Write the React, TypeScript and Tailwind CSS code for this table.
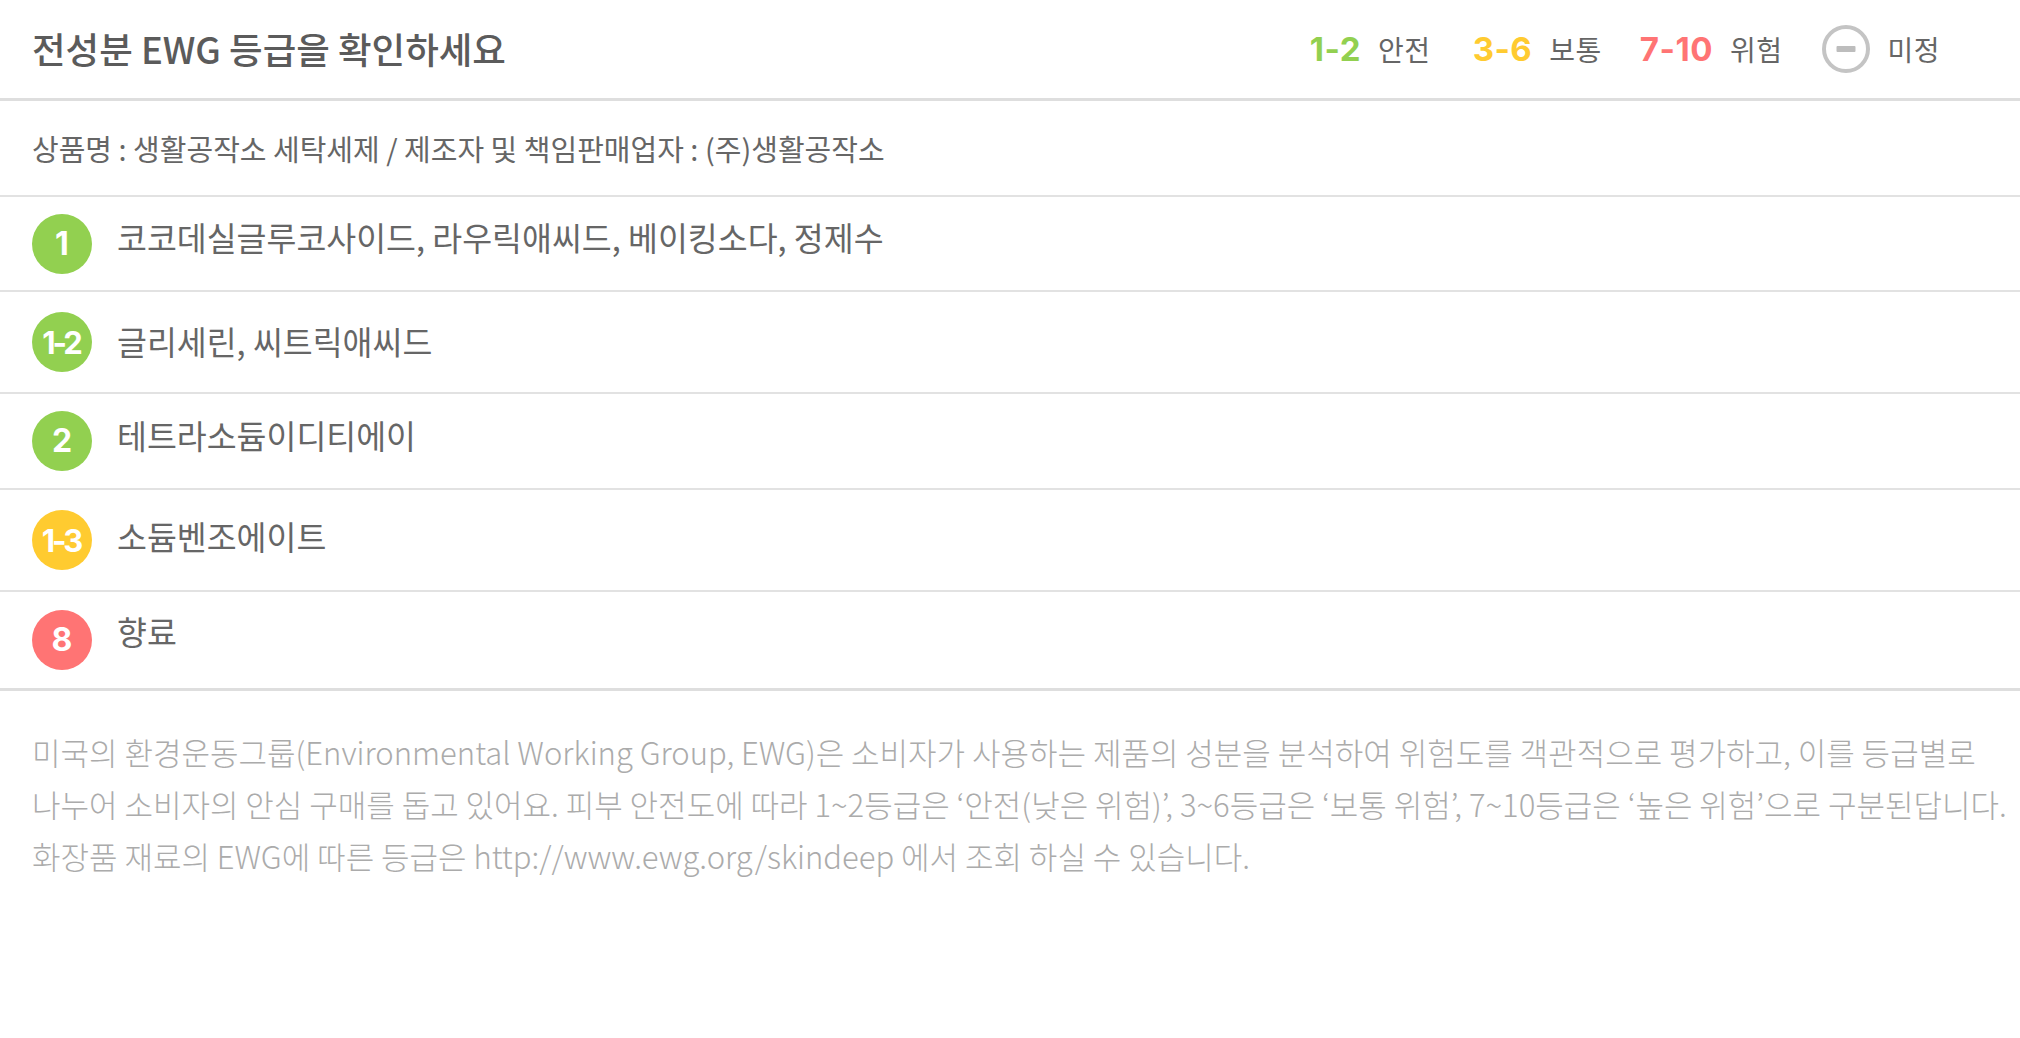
import React from "react";

const KR = { fontFamily: '"Noto Sans CJK KR", "Noto Sans", sans-serif' };
const NUM = { fontFamily: 'Inter, "Noto Sans", sans-serif' };

type Row = { grade: string; color: string; text: string; h: string; off: string };

const rows: Row[] = [
  { grade: "1", color: "bg-[#92d050]", text: "코코데실글루코사이드, 라우릭애씨드, 베이킹소다, 정제수", h: "h-[95px]", off: "-mt-[13px]" },
  { grade: "1-2", color: "bg-[#92d050]", text: "글리세린, 씨트릭애씨드", h: "h-[102px]", off: "-mt-[2px]" },
  { grade: "2", color: "bg-[#92d050]", text: "테트라소듐이디티에이", h: "h-[96px]", off: "-mt-[12px]" },
  { grade: "1-3", color: "bg-[#ffcb30]", text: "소듐벤조에이트", h: "h-[102px]", off: "-mt-[8px]" },
  { grade: "8", color: "bg-[#ff7474]", text: "향료", h: "h-[99px]", off: "-mt-[18px]" },
];

function Badge({ grade, color }: { grade: string; color: string }) {
  const multi = grade.length > 1;
  return (
    <div
      className={`${color} w-[60px] h-[60px] rounded-full flex items-center justify-center text-white font-bold shrink-0 leading-none ${
        multi ? "text-[31px] tracking-[-3px] pr-[2px]" : "text-[32px]"
      }`}
      style={NUM}
    >
      {grade}
    </div>
  );
}

function Undetermined() {
  return (
    <svg width="48" height="48" viewBox="0 0 48 48" className="shrink-0">
      <circle cx="24" cy="24" r="22" fill="none" stroke="#c4c4c4" strokeWidth="4" />
      <rect x="14.5" y="21" width="19" height="6" rx="1" fill="#bdbdbd" />
    </svg>
  );
}

export default function App() {
  return (
    <div className="w-full bg-white" style={KR}>
      {/* Header */}
      <div className="h-[101px] flex items-center justify-between pl-[32px] pr-[80px] border-b-[3px] border-[#dedede]">
        <h1 className="text-[36.5px] font-medium text-[#5b5b5b] leading-none">
          전성분 EWG 등급을 확인하세요
        </h1>
        <div className="flex items-center">
          <span className="text-[33px] font-bold tracking-[0.5px] text-[#92d050] leading-none" style={NUM}>1-2</span>
          <span className="ml-[17px] text-[28px] tracking-[0.5px] text-[#666] leading-none">안전</span>
          <span className="ml-[42px] text-[33px] font-bold tracking-[0.5px] text-[#ffcb30] leading-none" style={NUM}>3-6</span>
          <span className="ml-[17px] text-[28px] tracking-[0.5px] text-[#666] leading-none">보통</span>
          <span className="ml-[38px] text-[33px] font-bold tracking-[0.5px] text-[#ff7474] leading-none" style={NUM}>7-10</span>
          <span className="ml-[17px] text-[28px] tracking-[0.5px] text-[#666] leading-none">위험</span>
          <span className="ml-[40px] flex items-center">
            <Undetermined />
          </span>
          <span className="ml-[17px] text-[28px] tracking-[0.5px] text-[#666] leading-none">미정</span>
        </div>
      </div>

      {/* Product info */}
      <div className="h-[96px] flex items-center px-[32px] border-b-2 border-[#e2e2e2]">
        <p className="text-[29px] text-[#666] leading-none">
          상품명 : 생활공작소 세탁세제 / 제조자 및 책임판매업자 : (주)생활공작소
        </p>
      </div>

      {/* Ingredient rows */}
      {rows.map((r, i) => (
        <div
          key={i}
          className={`${r.h} flex items-center pl-[32px] gap-[25px] ${
            i === rows.length - 1 ? "border-b-[3px] border-[#dedede]" : "border-b-2 border-[#e2e2e2]"
          }`}
        >
          <Badge grade={r.grade} color={r.color} />
          <span className={`text-[32.5px] text-[#666] leading-none ${r.off}`}>{r.text}</span>
        </div>
      ))}

      {/* Description */}
      <div className="pl-[32px] pr-[10px] pt-[35px] pb-[40px]">
        <p className="text-[31px] leading-[52px] text-[#ababab] font-light whitespace-nowrap">
          미국의 환경운동그룹(Environmental Working Group, EWG)은 소비자가 사용하는 제품의 성분을 분석하여 위험도를 객관적으로 평가하고, 이를 등급별로
          <br />
          나누어 소비자의 안심 구매를 돕고 있어요. 피부 안전도에 따라 1~2등급은 ‘안전(낮은 위험)’, 3~6등급은 ‘보통 위험’, 7~10등급은 ‘높은 위험’으로 구분된답니다.
          <br />
          화장품 재료의 EWG에 따른 등급은 http://www.ewg.org/skindeep 에서 조회 하실 수 있습니다.
        </p>
      </div>
    </div>
  );
}
